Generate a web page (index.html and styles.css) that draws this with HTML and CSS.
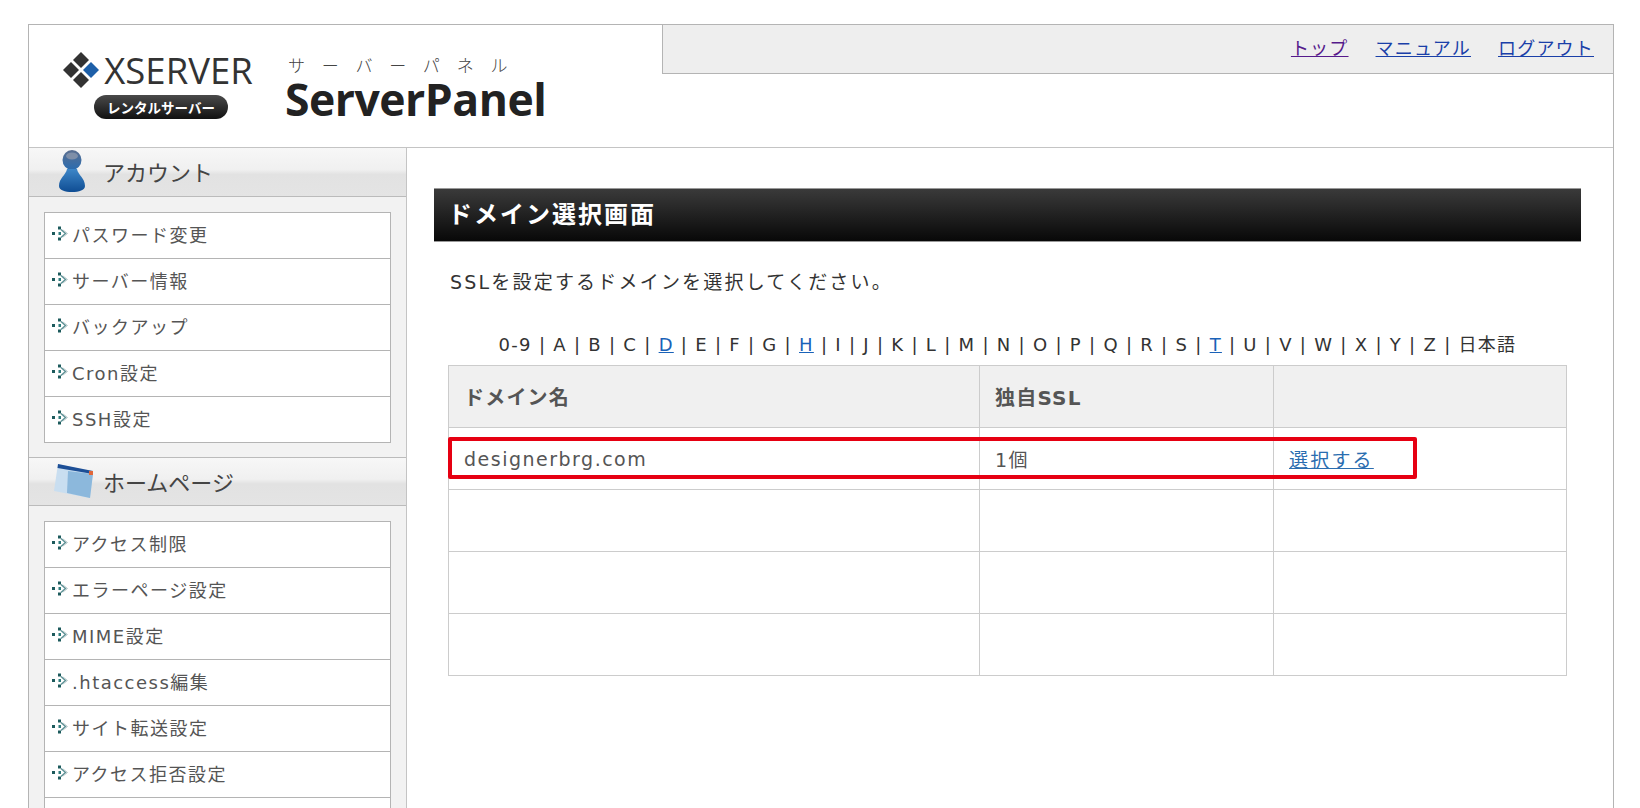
FILE: index.html
```html
<!DOCTYPE html>
<html lang="ja">
<head>
  <meta charset="UTF-8">
  <meta name="viewport" content="width=device-width, initial-scale=1.0">
  <title>ServerPanel</title>
  <link rel="stylesheet" href="styles.css">
</head>
<body>
  <svg class="defs" width="0" height="0">
    <symbol id="bullet" viewBox="0 0 17 17">
      <rect x="0" y="7" width="3" height="3" fill="#1c5a5c"/>
      <rect x="6" y="1.5" width="3" height="3" fill="#1c5a5c"/>
      <rect x="6" y="12.5" width="3" height="3" fill="#1c5a5c"/>
      <rect x="6.5" y="7" width="2.5" height="3" fill="#2c7c7c"/>
      <path d="M9 4.5l4.5 4-4.5 4" fill="none" stroke="#5d9296" stroke-width="1.5"/>
      <path d="M11 5l4.5 3.5-4.5 3.5" fill="none" stroke="#b5c6c8" stroke-width="1"/>
    </symbol>
    <linearGradient id="personBody" x1="0" y1="0" x2="0" y2="1">
      <stop offset="0" stop-color="#3d86c8"/>
      <stop offset="1" stop-color="#0f4d93"/>
    </linearGradient>
    <linearGradient id="personHead" x1="0" y1="0" x2="0" y2="1">
      <stop offset="0" stop-color="#5c6f90"/>
      <stop offset="1" stop-color="#2a6cb0"/>
    </linearGradient>
  </svg>

  <div class="page">
    <header class="header">
      <div class="logos">
        <div class="xserver">
          <div class="xserver-top">
            <svg class="diamonds" width="36" height="36" viewBox="0 0 36 36">
              <path d="M18 0l8 8-8 8-8-8z" fill="#333"/>
              <path d="M8 10l8 8-8 8-8-8z" fill="#333"/>
              <path d="M18 20l8 8-8 8-8-8z" fill="#333"/>
              <path d="M28 10l8 8-8 8-8-8z" fill="#1d5fa8"/>
            </svg>
            <span class="xserver-name">XSERVER</span>
          </div>
          <span class="rental">レンタルサーバー</span>
        </div>
        <div class="panel-logo">
          <span class="panel-kana">サーバーパネル</span>
          <span class="panel-name">ServerPanel</span>
        </div>
      </div>
      <nav class="top-nav">
        <a class="visited" href="#">トップ</a>
        <a href="#">マニュアル</a>
        <a href="#">ログアウト</a>
      </nav>
    </header>

    <div class="body-row">
      <aside class="sidebar">
        <h3 class="side-title">
          <svg class="side-icon" width="32" height="42" viewBox="0 0 32 42">
            <ellipse cx="16" cy="10" rx="9.5" ry="10" fill="url(#personHead)"/>
            <ellipse cx="16" cy="6" rx="6" ry="3.5" fill="#7f8fa8"/>
            <path d="M11 19h10c1 6 8 9 8 17 0 4-6 6-13 6S3 40 3 36c0-8 7-11 8-17z" fill="url(#personBody)"/>
          </svg>
          アカウント
        </h3>
        <ul class="menu">
          <li><svg class="bullet"><use href="#bullet"/></svg>パスワード変更</li>
          <li><svg class="bullet"><use href="#bullet"/></svg>サーバー情報</li>
          <li><svg class="bullet"><use href="#bullet"/></svg>バックアップ</li>
          <li><svg class="bullet"><use href="#bullet"/></svg>Cron設定</li>
          <li><svg class="bullet"><use href="#bullet"/></svg>SSH設定</li>
        </ul>
        <h3 class="side-title">
          <svg class="side-icon" width="40" height="36" viewBox="0 0 40 36">
            <path d="M4 1l35 8-3 26L0 28z" fill="#c9def0"/>
            <path d="M14 8l25 3-3 24-23-5z" fill="#8cb8dc"/>
            <path d="M4 1l35 7v3L3.500 5z" fill="#1d4f96"/>
            <rect x="35" y="8" width="4" height="4" fill="#e0673a"/>
          </svg>
          ホームページ
        </h3>
        <ul class="menu">
          <li><svg class="bullet"><use href="#bullet"/></svg>アクセス制限</li>
          <li><svg class="bullet"><use href="#bullet"/></svg>エラーページ設定</li>
          <li><svg class="bullet"><use href="#bullet"/></svg>MIME設定</li>
          <li><svg class="bullet"><use href="#bullet"/></svg>.htaccess編集</li>
          <li><svg class="bullet"><use href="#bullet"/></svg>サイト転送設定</li>
          <li><svg class="bullet"><use href="#bullet"/></svg>アクセス拒否設定</li>
          <li></li>
        </ul>
      </aside>

      <main class="main">
        <h2 class="main-title">ドメイン選択画面</h2>
        <p class="lead">SSLを設定するドメインを選択してください。</p>
        <div class="domain-area">
          <p class="alpha">0-9 | A | B | C | <a href="#">D</a> | E | F | G | <a href="#">H</a> | I | J | K | L | M | N | O | P | Q | R | S | <a href="#">T</a> | U | V | W | X | Y | Z | 日本語</p>
          <div class="table-wrap">
            <table class="domains">
              <tr><th class="col-name">ドメイン名</th><th class="col-ssl">独自SSL</th><th></th></tr>
              <tr><td>designerbrg.com</td><td>1個</td><td><a href="#">選択する</a></td></tr>
              <tr><td></td><td></td><td></td></tr>
              <tr><td></td><td></td><td></td></tr>
              <tr><td></td><td></td><td></td></tr>
            </table>
            <div class="highlight"></div>
          </div>
        </div>
      </main>
    </div>
  </div>
</body>
</html>
```

FILE: styles.css
```css
html, body {
  height: 100%;
}
body {
  margin: 0;
  padding: 24px 26px 0 28px;
  box-sizing: border-box;
  overflow: hidden;
  background-color: #fff;
  color: #333;
  font-family: "DejaVu Sans", "Noto Sans CJK JP", sans-serif;
}
.defs {
  display: block;
}
.page {
  height: 784px;
  overflow: hidden;
  border: 1px solid #b4b4b4;
  border-bottom: none;
}

/* header */
.header {
  display: flex;
  justify-content: space-between;
  height: 122px;
  border-bottom: 1px solid #c4c4c4;
}
.logos {
  display: flex;
  gap: 30px;
  padding: 27px 0 0 32px;
}
.xserver {
  display: flex;
  flex-direction: column;
  align-items: center;
  width: 194px;
}
.xserver-top {
  display: flex;
  align-items: center;
  gap: 5px;
}
.xserver-name {
  font-family: "Open Sans", sans-serif;
  font-size: 36.500px;
  line-height: 36px;
  color: #333;
}
.rental {
  margin-top: 7px;
  margin-left: 6px;
  padding: 0 13px;
  border-radius: 12px;
  background: linear-gradient(#4a4a4a, #111);
  color: #fff;
  font-family: "Noto Sans CJK JP", sans-serif;
  font-size: 13.500px;
  font-weight: 700;
  line-height: 24px;
}
.panel-logo {
  display: flex;
  flex-direction: column;
  padding-top: 3px;
}
.panel-kana {
  font-family: "Noto Sans CJK JP", sans-serif;
  font-size: 17px;
  line-height: 20px;
  letter-spacing: 16.800px;
  font-weight: 300;
  color: #444;
  margin-left: 3px;
}
.panel-name {
  font-family: "Open Sans", sans-serif;
  font-size: 44.500px;
  font-weight: 700;
  line-height: 48px;
  letter-spacing: -0.5px;
  color: #222;
}
.top-nav {
  display: flex;
  justify-content: flex-end;
  gap: 27px;
  box-sizing: border-box;
  width: 951px;
  height: 49px;
  padding: 10px 19px 0 0;
  background-color: #eee;
  border-left: 1px solid #b4b4b4;
  border-bottom: 1px solid #b4b4b4;
  font-size: 18px;
  line-height: 27px;
  letter-spacing: 1.2px;
}
.top-nav a {
  color: #1a3fa8;
}
.top-nav a.visited {
  color: #551a8b;
}

/* sidebar */
.body-row {
  display: flex;
}
.sidebar {
  box-sizing: border-box;
  width: 378px;
  height: 800px;
  background-color: #f2f2f2;
  border-right: 1px solid #c4c4c4;
}
.side-title {
  display: flex;
  align-items: center;
  gap: 15px;
  box-sizing: border-box;
  height: 49px;
  margin: 0;
  padding: 0 0 2px 27px;
  background: linear-gradient(#f7f7f7, #f0f0f0 45%, #e2e2e2 55%, #e4e4e4);
  border-bottom: 1px solid #bbb;
  font-size: 22px;
  font-weight: 400;
  color: #444;
}
.menu + .side-title {
  border-top: 1px solid #bbb;
  padding-left: 25px;
  gap: 9px;
}
.menu {
  list-style: none;
  margin: 15px 15px 14px 15px;
  padding: 0;
  background-color: #fff;
  border: 1px solid #b4b4b4;
}
.menu li {
  display: flex;
  align-items: center;
  gap: 3px;
  box-sizing: border-box;
  height: 46px;
  padding: 0 0 4px 7px;
  border-bottom: 1px solid #b4b4b4;
  font-size: 18px;
  letter-spacing: 1.5px;
  color: #555;
}
.menu li:last-child {
  height: 45px;
  border-bottom: none;
}
.bullet {
  width: 17px;
  height: 17px;
  flex: none;
}

/* main */
.main {
  flex: 1;
  padding: 40px 32px 0 27px;
}
.main-title {
  box-sizing: border-box;
  height: 54px;
  margin: 0;
  padding-left: 14px;
  background: linear-gradient(#3a3a3a, #080808);
  border: 1px solid #999;
  border-width: 1px 0;
  color: #fff;
  font-size: 24px;
  font-weight: 700;
  line-height: 53px;
  letter-spacing: 2px;
}
.lead {
  margin: 26px 0 0 16px;
  font-size: 19px;
  line-height: 28px;
  letter-spacing: 2.2px;
  color: #333;
}
.domain-area {
  margin: 0 14px 0 14px;
}
.alpha {
  margin: 35px 0 0;
  font-size: 18px;
  line-height: 28px;
  text-align: center;
  letter-spacing: 1.3px;
  color: #333;
}
.alpha a {
  color: #1a62b8;
}
.table-wrap {
  position: relative;
  margin-top: 6px;
}
.domains {
  width: 100%;
  border-collapse: collapse;
  table-layout: fixed;
  font-size: 19px;
  color: #555;
}
.domains th, .domains td {
  height: 61px;
  padding: 0 15px;
  border: 1px solid #ccc;
  text-align: left;
  letter-spacing: 1.5px;
}
.domains th {
  background-color: #f0f0f0;
  font-size: 20px;
  font-weight: 700;
  letter-spacing: 1.2px;
}
.col-name {
  width: 500px;
}
.col-ssl {
  width: 263px;
}
.domains a {
  color: #2a6db0;
  letter-spacing: 2.2px;
}
.highlight {
  position: absolute;
  left: 0;
  top: 72px;
  width: 969px;
  height: 42px;
  box-sizing: border-box;
  border: 4px solid #e60012;
  border-radius: 2px;
}
```
